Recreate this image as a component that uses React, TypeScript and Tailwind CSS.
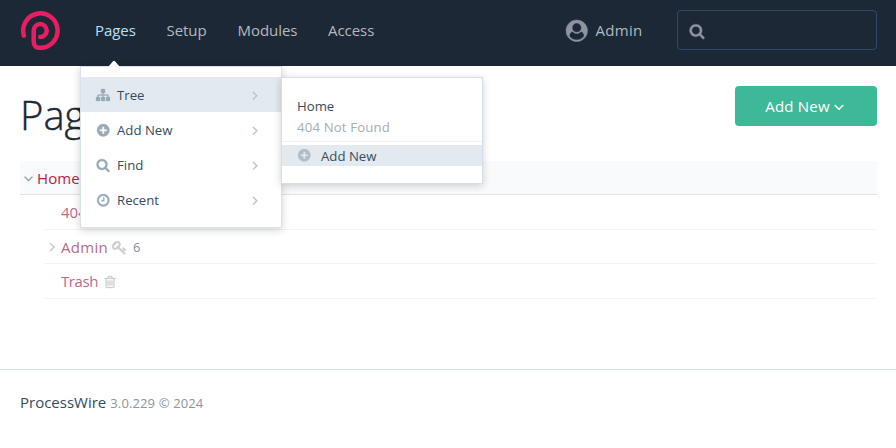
import React from "react";

const paths = {
  right:
    "M1171 960q0 13-10 23l-466 466q-10 10-23 10t-23-10l-50-50q-10-10-10-23t10-23l393-393-393-393q-10-10-10-23t10-23l50-50q10-10 23-10t23 10l466 466q10 10 10 23z",
  down: "M1395 736q0 13-10 23l-466 466q-10 10-23 10t-23-10l-466-466q-10-10-10-23t10-23l50-50q10-10 23-10t23 10l393 393 393-393q10-10 23-10t23 10l50 50q10 10 10 23z",
  plus: "M1344 960v-128q0-26-19-45t-45-19h-256v-256q0-26-19-45t-45-19h-128q-26 0-45 19t-19 45v256h-256q-26 0-45 19t-19 45v128q0 26 19 45t45 19h256v256q0 26 19 45t45 19h128q26 0 45-19t19-45v-256h256q26 0 45-19t19-45zm320-64q0 209-103 385.500t-279.500 279.500-385.500 103-385.500-103-279.500-279.500-103-385.500 103-385.500 279.500-279.500 385.500-103 385.500 103 279.500 279.500 103 385.500z",
  search:
    "M1216 832q0-185-131.500-316.500t-316.500-131.500-316.500 131.500-131.500 316.500 131.500 316.500 316.500 131.500 316.500-131.500 131.500-316.500zm512 832q0 52-38 90t-90 38q-54 0-90-38l-343-342q-179 124-399 124-143 0-273.500-55.500t-225-150-150-225-55.500-273.500 55.500-273.500 150-225 225-150 273.500-55.500 273.500 55.500 225 150 150 225 55.500 273.500q0 220-124 399l343 343q37 37 37 90z",
  clock:
    "M1024 544v448q0 14-9 23t-23 9h-320q-14 0-23-9t-9-23v-64q0-14 9-23t23-9h224v-352q0-14 9-23t23-9h64q14 0 23 9t9 23zm416 352q0-148-73-273t-198-198-273-73-273 73-198 198-73 273 73 273 198 198 273 73 273-73 198-198 73-273zm224 0q0 209-103 385.500t-279.500 279.500-385.500 103-385.500-103-279.500-279.500-103-385.500 103-385.500 279.500-279.500 385.500-103 385.500 103 279.500 279.500 103 385.500z",
  sitemap:
    "M1792 1248v320q0 40-28 68t-68 28h-320q-40 0-68-28t-28-68v-320q0-40 28-68t68-28h96v-192h-512v192h96q40 0 68 28t28 68v320q0 40-28 68t-68 28h-320q-40 0-68-28t-28-68v-320q0-40 28-68t68-28h96v-192h-512v192h96q40 0 68 28t28 68v320q0 40-28 68t-68 28h-320q-40 0-68-28t-28-68v-320q0-40 28-68t68-28h96v-192q0-52 38-90t90-38h512v-192h-96q-40 0-68-28t-28-68v-320q0-40 28-68t68-28h320q40 0 68 28t28 68v320q0 40-28 68t-68 28h-96v192h512q52 0 90 38t38 90v192h96q40 0 68 28t28 68z",
  key: "M832 512q0-80-56-136t-136-56-136 56-56 136q0 42 19 83-41-19-83-19-80 0-136 56t-56 136 56 136 136 56 136-56 56-136q0-42-19-83 41 19 83 19 80 0 136-56t56-136zm851 704q0 17-49 66t-66 49q-9 0-28.500-16t-36.500-33-38.500-40-24.500-26l-96 96 220 220q28 28 28 68 0 42-39 81t-81 39q-40 0-68-28l-671-671q-176 131-365 131-163 0-265.500-102.500t-102.500-265.500q0-160 95-313t248-248 313-95q163 0 265.500 102.500t102.500 265.500q0 189-131 365l355 355 96-96q-3-3-26-24.500t-40-38.500-33-36.500-16-28.500q0-17 49-66t66-49q13 0 23 10 6 6 46 44.500t82 79.500 86.500 86 73 78 28.500 41z",
  trash:
    "M704 736v576q0 14-9 23t-23 9h-64q-14 0-23-9t-9-23v-576q0-14 9-23t23-9h64q14 0 23 9t9 23zm256 0v576q0 14-9 23t-23 9h-64q-14 0-23-9t-9-23v-576q0-14 9-23t23-9h64q14 0 23 9t9 23zm256 0v576q0 14-9 23t-23 9h-64q-14 0-23-9t-9-23v-576q0-14 9-23t23-9h64q14 0 23 9t9 23zm128 724v-948h-896v948q0 22 7 40.500t14.500 27 10.500 8.500h832q3 0 10.500-8.500t14.500-27 7-40.500zm-672-1076h448l-48-117q-7-9-17-11h-317q-10 2-17 11zm928 32v64q0 14-9 23t-23 9h-96v948q0 83-47 143.500t-113 60.500h-832q-66 0-113-58.500t-47-141.500v-952h-96q-14 0-23-9t-9-23v-64q0-14 9-23t23-9h309l70-167q15-37 54-63t79-26h320q40 0 79 26t54 63l70 167h309q14 0 23 9t9 23z",
  user: "M1523 1339q-22-155-87.500-257.500t-184.500-118.500q-67 74-159.500 115.500t-195.500 41.500-195.500-41.500-159.500-115.500q-119 16-184.500 118.500t-87.500 257.500q106 150 271 237.500t356 87.500 356-87.500 271-237.500zm-243-699q0-159-112.500-271.500t-271.500-112.500-271.500 112.500-112.500 271.500 112.500 271.500 271.500 112.500 271.500-112.500 112.500-271.500zm512 256q0 182-71 347.500t-190.500 286-285.500 191.500-349 71q-182 0-348-71t-286-191-191-286-71-348 71-348 191-286 286-191 348-71 348 71 286 191 191 286 71 348z",
};

type IconName = keyof typeof paths;

function Icon({ name, className }: { name: IconName; className: string }) {
  return (
    <svg
      viewBox="0 0 1792 1792"
      fill="currentColor"
      stroke="currentColor"
      strokeWidth="36"
      className={`shrink-0 overflow-visible ${className}`}
      aria-hidden="true"
    >
      <path d={paths[name]} />
    </svg>
  );
}

function Logo() {
  return (
    <svg viewBox="0 0 40 40" className="mt-[10px] ml-5 size-10 shrink-0" fill="none" stroke="#eb1d61" strokeWidth="4.5" strokeLinecap="round" strokeLinejoin="round">
      <path d="M3.9 25.6A17.2 17.2 0 1 1 20.3 37.8Q13.7 38 13.7 31.5V20.6A6.5 6.5 0 1 1 20.2 27.1" />
    </svg>
  );
}

const nav = [
  { label: "Pages", box: "w-[71.5px]", text: "text-[#b5e0f5]" },
  { label: "Setup", box: "w-[71px]", text: "text-[#b4b8bf]" },
  { label: "Modules", box: "w-[90.5px]", text: "text-[#b4b8bf]" },
  { label: "Access", box: "w-[60px]", text: "text-[#b4b8bf]" },
];

const menu: { icon: IconName; size: string; label: string; active?: boolean }[] = [
  { icon: "sitemap", size: "size-[14px]", label: "Tree", active: true },
  { icon: "plus", size: "size-[14.5px]", label: "Add New" },
  { icon: "search", size: "size-[14px]", label: "Find" },
  { icon: "clock", size: "size-[14.5px]", label: "Recent" },
];

function Masthead() {
  return (
    <header className="flex h-[66px] bg-[#1d2836] text-[15px] leading-[60px]">
      <Logo />
      <nav className="ml-[35px] flex flex-1 tracking-[-0.05px]">
        {nav.map((n) => (
          <a key={n.label} className={`${n.box} ${n.text}`}>
            {n.label}
          </a>
        ))}
      </nav>
      <div className="flex w-[111px] tracking-[0.3px] text-[#b4b8bf]">
        <Icon name="user" className="mt-5 mr-2 size-[21.5px] text-[#9094a0]" />
        Admin
      </div>
      <div className="mt-[10px] mr-[19px] h-10 w-[200px] rounded border border-[#31486a] pt-3 pl-[11px]">
        <Icon name="search" className="size-4 text-[#9094a0]" />
      </div>
    </header>
  );
}

function Dropdown() {
  return (
    <div className="absolute top-[66px] left-20 h-[162px] w-[202px] border border-[#d9e1ea] bg-white pt-[10px] text-[13.2px] text-[#354b60] shadow-[0_2px_8px_rgba(0,0,0,0.18)]">
      <svg viewBox="0 0 12 7" className="absolute -top-[7px] left-[27px] h-[7px] w-3" fill="#fff">
        <path d="M0 7L5 1.2Q6 .2 7 1.2L12 7Z" />
      </svg>
      {menu.map((m) => (
        <div key={m.label} className={`flex h-[35px] items-center pr-[18.5px] pl-[15px] ${m.active ? "bg-[#e2e9ef]" : ""}`}>
          <span className="mr-[7px] flex w-[14px] justify-center pt-px text-[#97aab8]">
            <Icon name={m.icon} className={m.size} />
          </span>
          <span className="flex-1 pt-[2px]">{m.label}</span>
          <Icon name="right" className="mt-px size-[14.5px] text-[#b5c2cc]" />
        </div>
      ))}
    </div>
  );
}

function Submenu() {
  return (
    <div className="absolute top-[77px] left-[281px] h-[107px] w-[202px] border border-[#d5dfe9] bg-white pt-[18px] text-[13.2px] leading-[21px] text-[#354b60] shadow-[0_2px_8px_rgba(0,0,0,0.18)]">
      <div className="pl-[15px]">Home</div>
      <div className="border-b border-[#eff3f6] pb-[3px] pl-[15px] tracking-[0.15px] text-[#a4aeb7]">404 Not Found</div>
      <div className="mt-[3px] flex h-[21px] items-center bg-[#e2e9ef] pl-[15px]">
        <Icon name="plus" className="mr-[9.5px] size-[14.5px] text-[#b0bdc7]" />
        <span className="pt-[2px]">Add New</span>
      </div>
    </div>
  );
}

function PageTree() {
  return (
    <section className="mt-[35px] mr-[19px] ml-5 text-[15px] text-[#b96a86]">
      <div className="flex h-[34px] items-center border-b border-[#dfe2e5] bg-[#f9fafc] pl-[1px] text-[#be1645]">
        <Icon name="down" className="mt-[2px] mr-[1px] size-[15px] text-[#9aa5a5]" />
        <span className="pt-px tracking-[0.1px]">Home</span>
      </div>
      <div className="ml-6">
        <div className="flex h-[35px] items-center border-b border-[#f2f3f5] pl-[17px]">404 Not Found</div>
        <div className="flex h-[34px] items-center border-b border-[#f2f3f5] pl-[1px]">
          <Icon name="right" className="mr-[1px] size-[15px] text-[#c3c8c8]" />
          <span className="pt-[2px] tracking-[0.3px]">Admin</span>
          <Icon name="key" className="mt-px ml-[4px] size-[15px] text-[#cbcdd1]" />
          <span className="ml-[6px] pt-[3px] text-[13px] text-[#7f8a9c]">6</span>
        </div>
        <div className="flex h-[35px] items-center border-b border-[#f2f3f5] pl-[17px]">
          <span className="tracking-[-0.4px]">Trash</span>
          <Icon name="trash" className="mt-px ml-[4.5px] size-[14px] text-[#cbcdd1]" />
        </div>
      </div>
    </section>
  );
}

export default function App() {
  return (
    <div className="relative h-[448px] w-[896px] overflow-hidden bg-white font-['Open_Sans','Noto_Sans',sans-serif]">
      <Masthead />
      <main>
        <div className="flex h-[60px] justify-between pt-5 pr-[19px] pl-5">
          <h1 className="-mt-px text-[40px] leading-[60px] font-light text-[#1d2836] [-webkit-text-stroke:0.4px_#1d2836]">Pages</h1>
          <button className="flex h-10 w-[142px] items-center justify-center rounded bg-[#3eb998] text-[15px] tracking-[0.2px] text-white">
            Add New
            <Icon name="down" className="mt-px ml-[1px] size-4" />
          </button>
        </div>
        <PageTree />
      </main>
      <footer className="mt-[70px] flex items-baseline border-t border-[#d9e1ea] pt-[21px] pl-5 text-[15px] text-[#354b60]">
        ProcessWire
        <span className="ml-[4px] text-[13px] tracking-[0.13px] text-[#8d94a0]">3.0.229 © 2024</span>
      </footer>
      <Dropdown />
      <Submenu />
    </div>
  );
}
